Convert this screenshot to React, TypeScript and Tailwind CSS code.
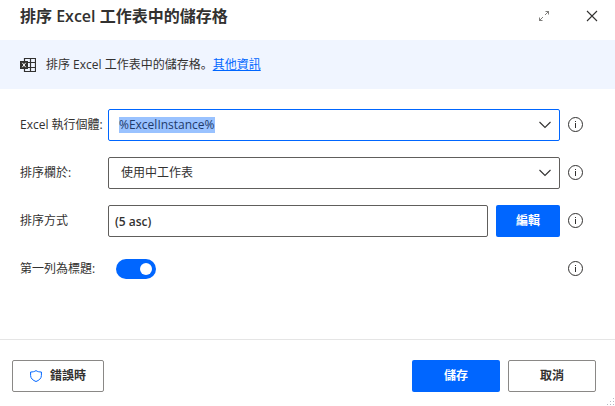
import { useEffect, useRef, useState, type ReactNode } from 'react';

function InfoButton({ label }: { label: string }) {
  return (
    <button type="button" aria-label={label} className="flex size-4 shrink-0 items-center justify-center text-[#323130]">
      <svg viewBox="0 0 16 16" className="size-4" fill="none" stroke="currentColor">
        <circle cx="7.500" cy="7.500" r="7" />
        <path d="M7.500 6v5M7.500 4v1" />
      </svg>
    </button>
  );
}

function Chevron() {
  return (
    <svg viewBox="0 0 12 8" className="h-2 w-3" fill="none" stroke="currentColor" strokeWidth="1.1">
      <path d="M0.5 1 6 6.5 11.5 1" />
    </svg>
  );
}

function Row({ id, label, children }: { id: string; label: string; children: ReactNode }) {
  return (
    <div className="flex h-8 items-center">
      <label htmlFor={id} className="w-22 shrink-0 whitespace-nowrap">
        {label}
      </label>
      <div className="mr-2 flex min-w-0 flex-1 items-center gap-2">{children}</div>
      <InfoButton label={`${label} 資訊`} />
    </div>
  );
}

export default function App() {
  const instanceRef = useRef<HTMLInputElement>(null);
  const [instance, setInstance] = useState('%ExcelInstance%');
  const [header, setHeader] = useState(true);

  useEffect(() => {
    instanceRef.current?.focus();
    instanceRef.current?.select();
  }, []);

  return (
    <main className="bg-white font-['Open_Sans','Noto_Sans_CJK_TC',sans-serif] text-[12px] leading-4 text-[#323130]">
      <header className="flex h-10 items-center pr-[15px] pb-2 pl-5">
        <h1 className="flex-1 text-[16px] leading-6 font-semibold">排序 Excel 工作表中的儲存格</h1>
        <button type="button" aria-label="展開" className="mr-8 flex size-4 items-center justify-center">
          <svg viewBox="0 0 10 10" className="size-[10px]" fill="none" stroke="#605e5c">
            <path d="M6.500 .5h3v3M9.500 .5 6 4M3.500 9.500h-3v-3M.5 9.500 4 6" strokeWidth=".8" />
          </svg>
        </button>
        <button type="button" aria-label="關閉" className="flex size-4 items-center justify-center">
          <svg viewBox="0 0 12 12" className="size-3" fill="none" stroke="currentColor" strokeWidth="1.1">
            <path d="m1 1 10 10M11 1 1 11" />
          </svg>
        </button>
      </header>

      <section className="flex h-[49px] items-center bg-[#f0f5ff] px-5">
        <svg viewBox="0 0 16 16" className="mr-[10px] size-4 shrink-0" fill="none" stroke="#323130">
          <path d="M4.500 4V1.500h11v13h-11V12M10.500 1.500v13M7 5.500h8.500M7 10.500h8.500" strokeWidth="1.200" />
          <path d="M0 4h8v8H0z" fill="#323130" stroke="none" />
          <path d="m2.300 5.800 3.400 4.400M5.700 5.800 2.300 10.200" stroke="#fff" />
        </svg>
        <p>
          排序 Excel 工作表中的儲存格<span className="font-['Noto_Sans_CJK_JP',sans-serif]">。</span>
          <a href="#info" className="text-[#0066ff] underline">其他資訊</a>
        </p>
      </section>

      <form onSubmit={(e) => e.preventDefault()}>
        <div className="flex flex-col gap-4 pt-5 pr-[31px] pb-[54px] pl-5">
          <Row id="instance" label="Excel 執行個體:">
            <div className="flex h-8 min-w-0 flex-1 items-center rounded-xs border border-[#0066ff] pr-2 pl-[10px]">
              <input
                id="instance"
                ref={instanceRef}
                value={instance}
                onChange={(e) => setInstance(e.target.value)}
                className="min-w-0 flex-1 leading-4 outline-none selection:bg-[#99c2ff] selection:text-[#1f3b6b]"
              />
              <button type="button" aria-label="選擇執行個體"><Chevron /></button>
            </div>
          </Row>
          <Row id="sheet" label="排序欄於:">
            <div className="grid min-w-0 flex-1 items-center">
              <select
                id="sheet"
                className="col-start-1 row-start-1 h-8 w-full appearance-none rounded-xs border border-[#605e5c] bg-white pl-3 leading-4 outline-none"
              >
                <option>使用中工作表</option>
              </select>
              <span className="pointer-events-none col-start-1 row-start-1 mr-[9px] justify-self-end"><Chevron /></span>
            </div>
          </Row>
          <Row id="sort" label="排序方式">
            <input
              id="sort"
              readOnly
              value="(5 asc)"
              className="h-8 min-w-0 flex-1 rounded-xs border border-[#605e5c] px-[6px] font-semibold outline-none"
            />
            <button type="button" className="h-8 w-16 rounded-xs bg-[#0066ff] font-semibold text-white">編輯</button>
          </Row>
          <Row id="header" label="第一列為標題:">
            <span className="ml-2 grid items-center">
              <input
                id="header"
                type="checkbox"
                role="switch"
                checked={header}
                onChange={(e) => setHeader(e.target.checked)}
                className="peer col-start-1 row-start-1 h-5 w-10 appearance-none rounded-full bg-[#8a8886] checked:bg-[#0066ff]"
              />
              <span className="pointer-events-none col-start-1 row-start-1 mx-1 size-3 rounded-full bg-white peer-checked:justify-self-end" />
            </span>
          </Row>
        </div>

        <footer className="relative flex items-center gap-2 border-t border-[#e5e5e5] px-3 pt-5 pr-[19px] pb-[14px]">
          <button type="button" className="mr-auto flex h-8 w-23 items-center justify-center gap-2 rounded-xs border border-[#8a8886] font-semibold">
            <svg viewBox="0 0 12 12" className="size-3" fill="none" stroke="#0066ff">
              <path d="M6 .6C4.500 1.700 2.600 2 .6 2v3.500c0 3 2.400 4.900 5.400 6 3-1.100 5.400-3 5.400-6V2C9.400 2 7.500 1.700 6 .6Z" />
            </svg>
            錯誤時
          </button>
          <button type="submit" className="h-8 w-22 rounded-xs bg-[#0066ff] font-semibold text-white">儲存</button>
          <button type="button" className="h-8 w-22 rounded-xs border border-[#8a8886] font-semibold">取消</button>
          <svg viewBox="0 0 8 8" className="absolute right-0 bottom-0 size-2" fill="#b5b9c4">
            <path d="M6 0h1v1H6zM3 3h1v1H3zM6 3h1v1H6zM0 6h1v1H0zM3 6h1v1H3zM6 6h1v1H6z" />
          </svg>
        </footer>
      </form>
    </main>
  );
}
